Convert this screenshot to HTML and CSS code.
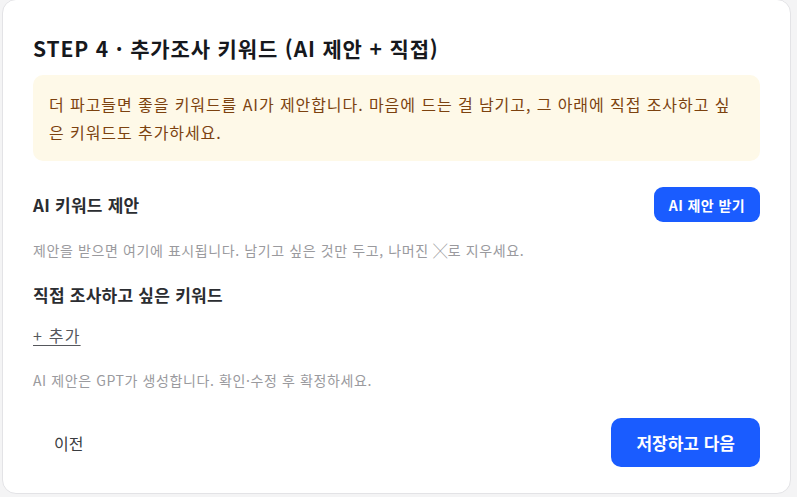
FILE: index.html
```html
<!DOCTYPE html>
<html lang="ko">
<head>
<meta charset="utf-8">
<link rel="stylesheet" href="styles.css">
</head>
<body>
<div class="card">
  <h1 class="title">STEP 4 · 추가조사 키워드 (AI 제안 + 직접)</h1>
  <div class="notice">더 파고들면 좋을 키워드를 AI가 제안합니다. 마음에 드는 걸 남기고, 그 아래에 직접 조사하고 싶은 키워드도 추가하세요.</div>
  <div class="section-row">
    <h2 class="section-title">AI 키워드 제안</h2>
    <button class="btn btn-small">AI 제안 받기</button>
  </div>
  <p class="hint hint-gap">제안을 받으면 여기에 표시됩니다. 남기고 싶은 것만 두고, 나머진 ╳로 지우세요.</p>
  <h2 class="section-title manual">직접 조사하고 싶은 키워드</h2>
  <a class="add-link">+ 추가</a>
  <p class="hint note">AI 제안은 GPT가 생성합니다. 확인·수정 후 확정하세요.</p>
  <div class="footer">
    <button class="btn-ghost">이전</button>
    <button class="btn btn-large">저장하고 다음</button>
  </div>
</div>
</body>
</html>
```
FILE: styles.css
```css
html, body {
  margin: 0;
  padding: 0;
}
body {
  background: #f4f4f5;
  font-family: "Noto Sans CJK KR", "Noto Sans", sans-serif;
  color: #222;
}
.card {
  box-sizing: border-box;
  width: 789px;
  height: 495px;
  margin: -1px 0 0 2px;
  background: #fff;
  border: 1px solid #e3e3e6;
  border-radius: 14px;
  padding: 34px 30px 26px 30px;
  display: flex;
  flex-direction: column;
}
.title {
  margin: 0;
  font-size: 21px;
  line-height: 28px;
  font-weight: 700;
  color: #16181d;
  letter-spacing: 0.85px;
}
.notice {
  margin-top: 13px;
  background: #fef9e8;
  border-radius: 10px;
  padding: 15px 24px 15px 16px;
  font-size: 16px;
  line-height: 28px;
  letter-spacing: 0.92px;
  color: #7c420f;
}
.section-row {
  margin-top: 26px;
  display: flex;
  align-items: center;
  justify-content: space-between;
}
.section-title {
  margin: 0;
  font-size: 17px;
  line-height: 24px;
  font-weight: 700;
  color: #2b2d31;
  letter-spacing: 0.25px;
}
.btn {
  border: none;
  background: #1a5cff;
  color: #fff;
  font-family: inherit;
  font-weight: 700;
  cursor: pointer;
}
.btn-small {
  height: 35px;
  padding: 0 15px;
  border-radius: 9px;
  font-size: 14px;
  letter-spacing: 0.4px;
}
.hint {
  margin: 0;
  font-size: 14px;
  line-height: 20px;
  color: #9a9a9e;
  letter-spacing: 0.6px;
}
.hint-gap {
  margin-top: 18px;
}
.manual {
  margin-top: 23px;
}
.add-link {
  margin-top: 17px;
  align-self: flex-start;
  font-size: 16px;
  line-height: 22px;
  color: #55575c;
  letter-spacing: 1.2px;
  text-decoration: underline;
  text-underline-offset: 3px;
}
.note {
  margin-top: 24px;
}
.footer {
  margin-top: auto;
  display: flex;
  justify-content: space-between;
  align-items: center;
}
.btn-ghost {
  border: none;
  background: transparent;
  font-family: inherit;
  font-size: 16px;
  color: #3a3c40;
  height: 49px;
  padding: 0 21px;
  border-radius: 10px;
}
.btn-large {
  height: 49px;
  padding: 0 25px;
  border-radius: 10px;
  font-size: 17px;
}
```
